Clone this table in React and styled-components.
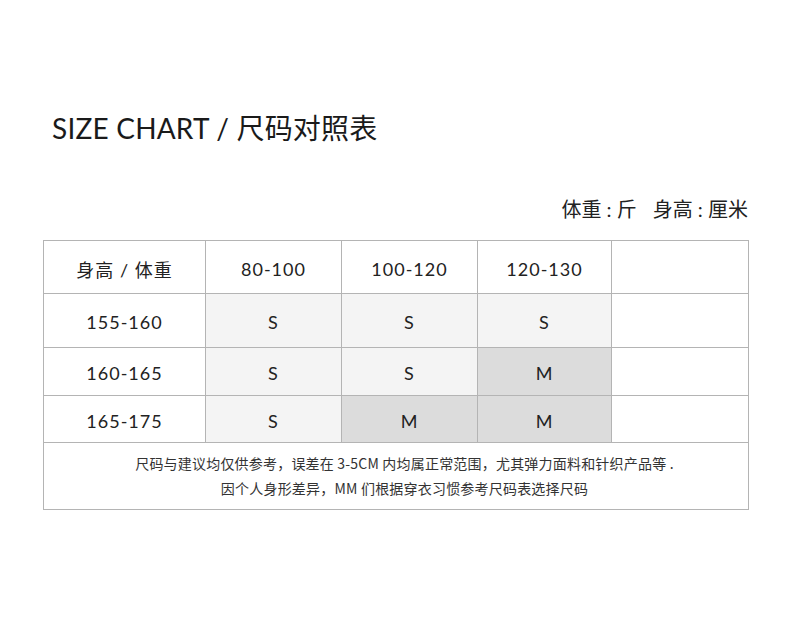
import styled, { createGlobalStyle } from "styled-components";

const GlobalStyle = createGlobalStyle`
  body {
    margin: 0;
    background: #fff;
    font-family: Lato, "Noto Sans CJK SC", sans-serif;
    color: #222;
  }
`;

const rows = [
  { height: "155-160", h: 54, sizes: ["S", "S", "S"] },
  { height: "160-165", h: 48, sizes: ["S", "S", "M"] },
  { height: "165-175", h: 47, sizes: ["S", "M", "M"] },
];

const weights = ["80-100", "100-120", "120-130"];

function App() {
  return (
    <>
      <GlobalStyle />
      <Page>
        <Title>SIZE CHART / 尺码对照表</Title>
        <Units>
          <span>体重 : 斤</span>
          <span>身高 : 厘米</span>
        </Units>
        <Chart>
          <colgroup>
            <col style={{ width: 162 }} />
            <col style={{ width: 136 }} />
            <col style={{ width: 136 }} />
            <col style={{ width: 134 }} />
            <col style={{ width: 137 }} />
          </colgroup>
          <tbody>
            <Row $h={53}>
              <Cell>身高 / 体重</Cell>
              {weights.map((w) => (
                <Cell key={w}>{w}</Cell>
              ))}
              <Cell />
            </Row>
            {rows.map((r) => (
              <Row key={r.height} $h={r.h}>
                <Cell>{r.height}</Cell>
                {r.sizes.map((s, j) => (
                  <Cell key={j} $tone={s === "M" ? "dark" : "light"}>
                    {s}
                  </Cell>
                ))}
                <Cell />
              </Row>
            ))}
            <Row $h={67}>
              <NoteCell colSpan={5}>
                <p>尺码与建议均仅供参考，误差在 3-5CM 内均属正常范围，尤其弹力面料和针织产品等 .</p>
                <p>因个人身形差异，MM 们根据穿衣习惯参考尺码表选择尺码</p>
              </NoteCell>
            </Row>
          </tbody>
        </Chart>
      </Page>
    </>
  );
}

const Page = styled.div`
  width: 790px;
  height: 624px;
  padding: 110px 42px 0 43px;
  box-sizing: border-box;
`;

const Title = styled.h1`
  margin: 0 0 0 9px;
  font-size: 28px;
  font-weight: 400;
  line-height: 36px;
  letter-spacing: 0.2px;
  color: #1a1a1a;
`;

const Units = styled.div`
  display: flex;
  justify-content: flex-end;
  gap: 16px;
  margin-top: 50px;
  font-size: 20px;
  line-height: 26px;
  color: #222;
`;

const Chart = styled.table`
  margin-top: 18px;
  width: 705px;
  border-collapse: collapse;
  table-layout: fixed;
`;

const Row = styled.tr`
  height: ${(p) => p.$h}px;
`;

const Cell = styled.td`
  border: 1px solid #b4b4b4;
  padding: 3px 0 0;
  text-align: center;
  font-size: 18px;
  letter-spacing: 1px;
  color: #222;
  background: ${(p) =>
    p.$tone === "dark" ? "#dcdcdc" : p.$tone === "light" ? "#f4f4f4" : "#fff"};
`;

const NoteCell = styled.td`
  border: 1px solid #b4b4b4;
  text-align: center;
  padding: 5px 0 6px 17px;
  font-family: "Noto Sans CJK SC", sans-serif;
  font-size: 14px;
  color: #333;
  p {
    margin: 0;
    line-height: 25px;
    letter-spacing: 0.2px;
  }
`;

export default App;
